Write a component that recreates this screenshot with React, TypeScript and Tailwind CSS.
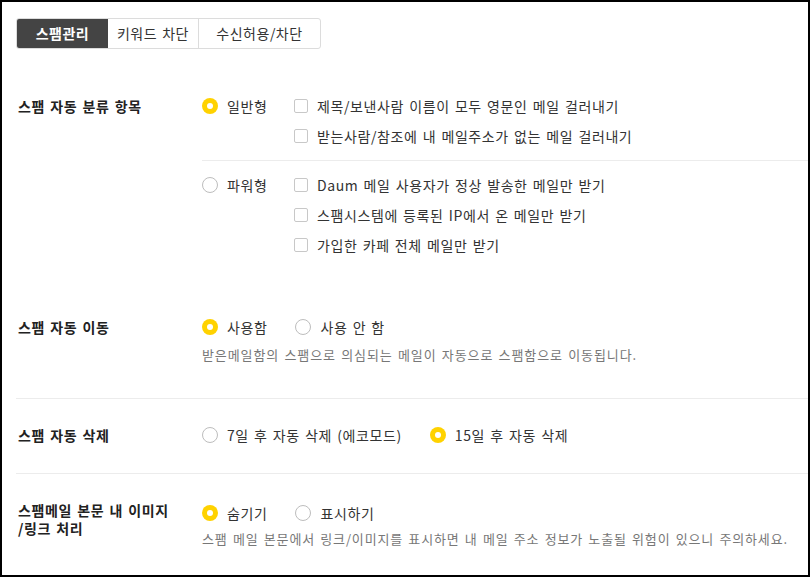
const font = { fontFamily: '"Noto Sans CJK KR", "Noto Sans", sans-serif' };

const Radio = ({ checked, label }: { checked?: boolean; label: string }) => (
  <div className="flex h-[30px] items-center gap-[9px]">
    {checked ? (
      <span className="flex h-4 w-4 items-center justify-center rounded-full bg-[#ffd200]">
        <span className="h-[6px] w-[6px] rounded-full bg-white" />
      </span>
    ) : (
      <span className="h-4 w-4 rounded-full border border-[#bdbdbd] bg-white" />
    )}
    <span className="text-[14px] text-[#333]">{label}</span>
  </div>
);

const Check = ({ label }: { label: string }) => (
  <div className="flex h-[30px] items-center gap-[9px]">
    <span className="h-[14px] w-[14px] rounded-[2px] border border-[#c8c8c8] bg-white" />
    <span className="text-[14px] text-[#333]">{label}</span>
  </div>
);

const Label = ({ children }: { children: React.ReactNode }) => (
  <div className="ml-[2px] w-[184px] shrink-0 text-[14px] font-bold text-[#222]">
    {children}
  </div>
);

const Divider = () => <div className="h-px bg-[#ececec]" />;

export default function App() {
  return (
    <div
      style={font}
      className="box-border h-[577px] w-[810px] overflow-hidden border-2 border-black bg-white pl-[14px] pt-[16px] tracking-[0.6px] [word-spacing:1.5px]"
    >
      <div className="flex h-[31px] w-[305px] overflow-hidden rounded-[3px] border border-[#dcdcdc] text-[14px] tracking-[0.5px]">
        <div className="flex w-[91px] items-center justify-center bg-[#444] font-bold text-white">
          스팸관리
        </div>
        <div className="flex w-[90px] items-center justify-center text-[#333]">
          키워드 차단
        </div>
        <div className="flex flex-1 items-center justify-center border-l border-[#dcdcdc] text-[#333]">
          수신허용/차단
        </div>
      </div>

      {/* 분류 항목 */}
      <div className="mt-[42px] flex">
        <Label>
          <div className="leading-[30px]">스팸 자동 분류 항목</div>
        </Label>
        <div className="flex-1">
          <div className="flex">
            <div className="w-[92px] shrink-0">
              <Radio checked label="일반형" />
            </div>
            <div>
              <Check label="제목/보낸사람 이름이 모두 영문인 메일 걸러내기" />
              <Check label="받는사람/참조에 내 메일주소가 없는 메일 걸러내기" />
            </div>
          </div>
          <div className="my-[9px]">
            <Divider />
          </div>
          <div className="flex">
            <div className="w-[92px] shrink-0">
              <Radio label="파워형" />
            </div>
            <div>
              <Check label="Daum 메일 사용자가 정상 발송한 메일만 받기" />
              <Check label="스팸시스템에 등록된 IP에서 온 메일만 받기" />
              <Check label="가입한 카페 전체 메일만 받기" />
            </div>
          </div>
        </div>
      </div>

      {/* 자동 이동 */}
      <div className="mt-[52px] flex pb-[33px]">
        <Label>
          <div className="leading-[30px]">스팸 자동 이동</div>
        </Label>
        <div className="flex-1">
          <div className="flex gap-[28px]">
            <Radio checked label="사용함" />
            <Radio label="사용 안 함" />
          </div>
          <p className="mt-[3px] text-[13px] leading-[20px] tracking-[0.9px] text-[#777]">
            받은메일함의 스팸으로 의심되는 메일이 자동으로 스팸함으로 이동됩니다.
          </p>
        </div>
      </div>
      <Divider />

      {/* 자동 삭제 */}
      <div className="flex pb-[23px] pt-[21px]">
        <Label>
          <div className="leading-[30px]">스팸 자동 삭제</div>
        </Label>
        <div className="flex flex-1 gap-[28px]">
          <Radio label="7일 후 자동 삭제 (에코모드)" />
          <Radio checked label="15일 후 자동 삭제" />
        </div>
      </div>
      <Divider />

      {/* 이미지 처리 */}
      <div className="flex pt-[24px]">
        <Label>
          <div className="pt-[3px] leading-[18px]">
            스팸메일 본문 내 이미지
            <br />
            /링크 처리
          </div>
        </Label>
        <div className="flex-1">
          <div className="flex gap-[28px]">
            <Radio checked label="숨기기" />
            <Radio label="표시하기" />
          </div>
          <p className="mt-[1px] text-[13px] leading-[20px] tracking-[0.85px] text-[#777]">
            스팸 메일 본문에서 링크/이미지를 표시하면 내 메일 주소 정보가 노출될 위험이 있으니 주의하세요.
          </p>
        </div>
      </div>
    </div>
  );
}
